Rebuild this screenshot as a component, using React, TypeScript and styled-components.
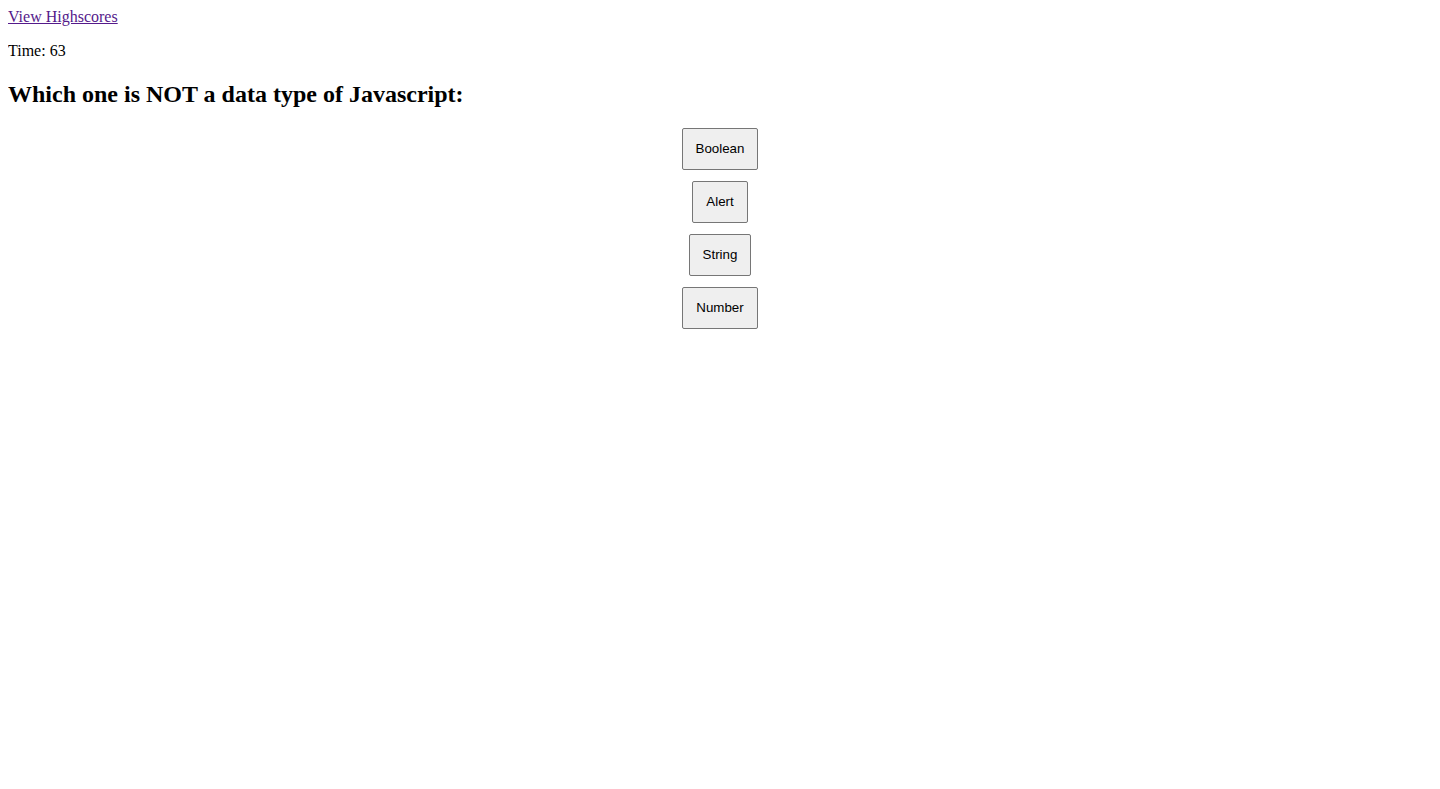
import styled, { createGlobalStyle } from "styled-components";

const GlobalStyle = createGlobalStyle`
    body {
        margin: 8px;
        background: #fff;
        font-family: "Liberation Serif", "Times New Roman", serif;
        font-size: 16px;
        color: #000;
    }
`

const answers = ["Boolean", "Alert", "String", "Number"];

export default function App() {
    return (
        <>
            <GlobalStyle/>
            <Header>
                <HighscoreLink href="#">View Highscores</HighscoreLink>
                <Timer>Time: 63</Timer>
            </Header>
            <Quiz>
                <Question>Which one is NOT a data type of Javascript:</Question>
                <Answers>
                    {answers.map((a) => (
                        <AnswerButton key={a}>{a}</AnswerButton>
                    ))}
                </Answers>
            </Quiz>
        </>
    );
}

const Header = styled.header`
`
const HighscoreLink = styled.a`
    color: #551a8b;
    text-decoration: underline;
`
const Timer = styled.p`
    margin: 16px 0;
`
const Quiz = styled.main`
`
const Question = styled.h2`
    font-size: 24px;
    font-weight: bold;
    margin: 20.92px 0 19.92px;
`
const Answers = styled.div`
    display: flex;
    flex-direction: column;
    align-items: center;
    gap: 11px;
`
const AnswerButton = styled.button`
    font-family: "Liberation Sans", Arial, sans-serif;
    font-size: 13.33px;
    line-height: 16px;
    padding: 12px 13px;
    background: #efefef;
    color: #000;
    border: 1px solid #767676;
    border-radius: 2px;
`
